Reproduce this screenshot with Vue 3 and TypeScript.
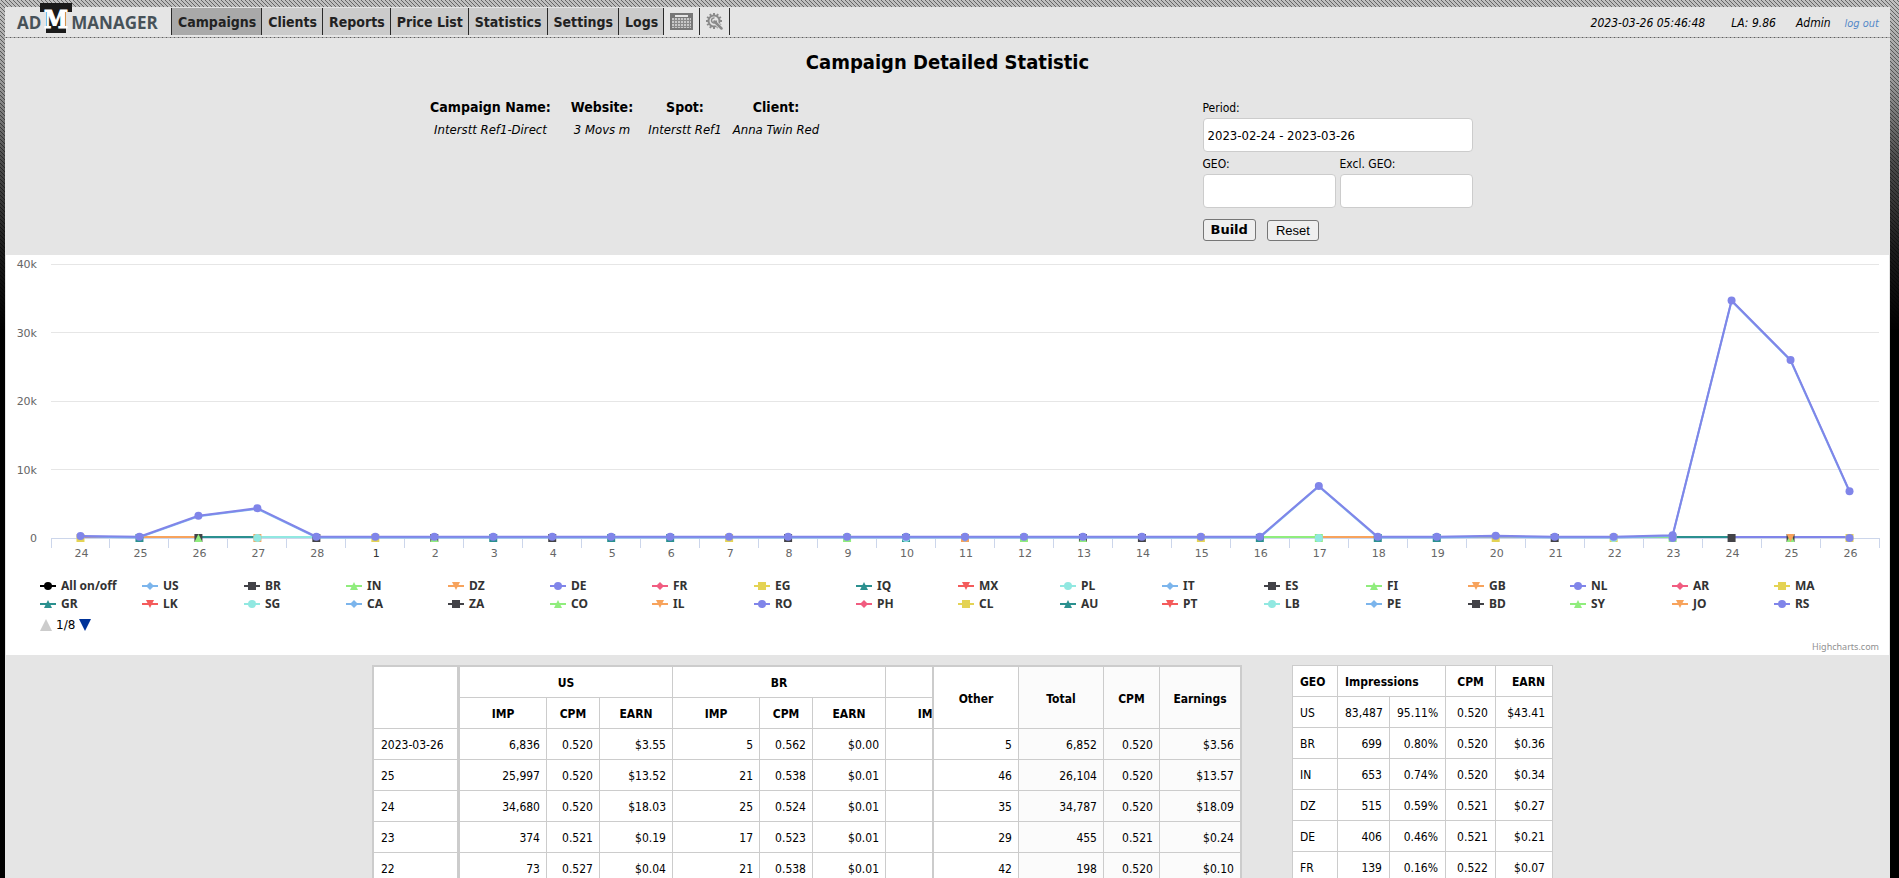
<script setup lang="ts">
interface NavItem {
  label: string
  active?: boolean
}

type Shape = 'circle' | 'diamond' | 'square' | 'triangle' | 'triangle-down'

interface LegendItem {
  name: string
  color: string
  shape: Shape
}

interface Marker {
  index: number
  color: string
  shape: Shape
}

const nav: NavItem[] = [
  { label: 'Campaigns', active: true },
  { label: 'Clients' },
  { label: 'Reports' },
  { label: 'Price List' },
  { label: 'Statistics' },
  { label: 'Settings' },
  { label: 'Logs' },
]

const details = [
  { title: 'Campaign Name:', value: 'Interstt Ref1-Direct' },
  { title: 'Website:', value: '3 Movs m' },
  { title: 'Spot:', value: 'Interstt Ref1' },
  { title: 'Client:', value: 'Anna Twin Red' },
]

/* ---- chart ---- */
const palette = [
  '#7cb5ec', '#434348', '#90ed7d', '#f7a35c', '#8085e9',
  '#f15c80', '#e4d354', '#2b908f', '#f45b5b', '#91e8e1',
]
const shapes: Shape[] = ['diamond', 'square', 'triangle', 'triangle-down', 'circle']
const countries = (
  'US BR IN DZ DE FR EG IQ MX PL IT ES FI GB NL AR MA ' +
  'GR LK SG CA ZA CO IL RO PH CL AU PT LB PE BD SY JO RS'
).split(' ')

const legend: LegendItem[] = [
  { name: 'All on/off', color: '#000000', shape: 'circle' },
  ...countries.map((name, i) => ({
    name,
    color: palette[i % palette.length],
    shape: shapes[i % shapes.length],
  })),
]

const days = [24, 25, 26, 27, 28, ...Array.from({ length: 26 }, (_, i) => i + 1)]
const totals = [
  300, 180, 3250, 4350, 180, 180, 180, 180, 180, 180, 180, 180, 180, 180, 180, 180,
  180, 180, 180, 180, 180, 7600, 180, 180, 320, 180, 180, 400, 34680, 25997, 6836,
]

const plot = { left: 45, right: 1873, top: 9, bottom: 283 }
const step = (plot.right - plot.left) / days.length
const px = (i: number) => plot.left + step * (i + 0.5)
const py = (v: number) => plot.bottom - (v / 40000) * (plot.bottom - plot.top)
const crisp = (v: number) => Math.floor(v) + 0.5
const line = (values: number[]) => values.map((v, i) => `${px(i)},${py(v)}`).join(' ')

const gridLevels = [
  { value: 40000, label: '40k' },
  { value: 30000, label: '30k' },
  { value: 20000, label: '20k' },
  { value: 10000, label: '10k' },
  { value: 0, label: '0' },
]

const [blue, dark, green, orange, violet, pink, yellow, teal, red, cyan] = palette

const segmentColors = [
  red, orange, teal, cyan, cyan, yellow, orange, pink, blue, dark, teal, yellow, pink, orange, pink,
  orange, dark, green, pink, red, green, orange, violet, orange, orange, orange, green, teal, violet, violet,
]

const lowMarkers: Marker[] = [
  ...[
    yellow, teal, dark, orange, dark, yellow, dark, teal, dark, teal, teal, yellow, dark, green,
    teal, orange, green, dark, dark, yellow, teal, green, teal, teal, yellow, dark, yellow, green,
    dark, dark, yellow,
  ].map((color, index) => ({ index, color, shape: 'square' as Shape })),
  { index: 2, color: green, shape: 'triangle' },
  { index: 3, color: cyan, shape: 'circle' },
  { index: 6, color: green, shape: 'triangle' },
  { index: 14, color: cyan, shape: 'circle' },
  { index: 15, color: blue, shape: 'diamond' },
  { index: 17, color: green, shape: 'triangle' },
  { index: 21, color: cyan, shape: 'circle' },
  { index: 26, color: cyan, shape: 'circle' },
  { index: 27, color: violet, shape: 'circle' },
  { index: 29, color: green, shape: 'triangle' },
  { index: 29, color: orange, shape: 'triangle-down' },
  { index: 30, color: violet, shape: 'circle' },
]

function symbol(shape: Shape, x: number, y: number): string {
  switch (shape) {
    case 'square':
      return `M${x - 4} ${y - 4}h8v8h-8z`
    case 'diamond':
      return `M${x} ${y - 4}L${x + 4} ${y}L${x} ${y + 4}L${x - 4} ${y}z`
    case 'triangle':
      return `M${x} ${y - 4}L${x + 4} ${y + 4}H${x - 4}z`
    case 'triangle-down':
      return `M${x - 4} ${y - 4}H${x + 4}L${x} ${y + 4}z`
    default:
      return `M${x - 4} ${y}a4 4 0 1 0 8 0a4 4 0 1 0 -8 0z`
  }
}

/* ---- tables ---- */
const groups = [
  { name: 'US', columns: ['IMP', 'CPM', 'EARN'] },
  { name: 'BR', columns: ['IMP', 'CPM', 'EARN'] },
  { name: '', columns: ['IMP', '', ''] },
]

const stats = [
  { date: '2023-03-26', cells: ['6,836', '0.520', '$3.55', '5', '0.562', '$0.00'], sum: ['5', '6,852', '0.520', '$3.56'] },
  { date: '25', cells: ['25,997', '0.520', '$13.52', '21', '0.538', '$0.01'], sum: ['46', '26,104', '0.520', '$13.57'] },
  { date: '24', cells: ['34,680', '0.520', '$18.03', '25', '0.524', '$0.01'], sum: ['35', '34,787', '0.520', '$18.09'] },
  { date: '23', cells: ['374', '0.521', '$0.19', '17', '0.523', '$0.01'], sum: ['29', '455', '0.521', '$0.24'] },
  { date: '22', cells: ['73', '0.527', '$0.04', '21', '0.538', '$0.01'], sum: ['42', '198', '0.520', '$0.10'] },
]

const geo = [
  ['US', '83,487', '95.11%', '0.520', '$43.41'],
  ['BR', '699', '0.80%', '0.520', '$0.36'],
  ['IN', '653', '0.74%', '0.520', '$0.34'],
  ['DZ', '515', '0.59%', '0.521', '$0.27'],
  ['DE', '406', '0.46%', '0.521', '$0.21'],
  ['FR', '139', '0.16%', '0.522', '$0.07'],
]

const teeth = Array.from({ length: 12 }, (_, i) => i * 30)
</script>

<template>
  <div class="page">
    <header class="header">
      <a class="logo" href="#" aria-label="AD M MANAGER">
        <span>AD</span>
        <svg class="mark" width="32" height="30" viewBox="0 0 32 30" aria-hidden="true">
          <path d="M0 0H32V9H26V30H6V9H0z" fill="#1a1a1a" />
          <text class="mark-letter" x="16" y="25" text-anchor="middle">M</text>
        </svg>
        <span>MANAGER</span>
      </a>

      <nav class="nav">
        <a v-for="item in nav" :key="item.label" href="#" class="tab" :class="{ active: item.active }">{{ item.label }}</a>
        <a href="#" class="tab icon" aria-label="Calendar">
          <svg width="23" height="17" viewBox="0 0 23 17">
            <path d="M0 0H23V17H0z" fill="#777" />
            <path d="M5 2H18V4H5z" fill="#e5e5e5" />
            <path d="M2 5H21V15H2z" fill="#c8c8c8" />
            <path d="M2 7.500H21M2 10.500H21M2 13.500H21M4.500 5V15M7.500 5V15M10.500 5V15M13.500 5V15M16.500 5V15M19.500 5V15" stroke="#8a8a8a" fill="none" />
          </svg>
        </a>
        <a href="#" class="tab icon last" aria-label="Tools">
          <svg width="17" height="17" viewBox="0 0 17 17">
            <g fill="#8a8a8a">
              <rect v-for="a in teeth" :key="a" x="7" y="0" width="2" height="2" :transform="`rotate(${a} 8 8)`" />
            </g>
            <circle cx="8" cy="8" r="5.500" fill="none" stroke="#8a8a8a" stroke-width="2" />
            <path d="M8.500 8.500L15.500 15.500" stroke="#e5e5e5" stroke-width="4" />
            <path d="M8.500 8.500L15.500 15.500" stroke="#8a8a8a" stroke-width="2.500" stroke-linecap="round" />
            <path d="M8.500 5A2.500 2.500 0 1 0 10.500 7.500" fill="none" stroke="#8a8a8a" stroke-width="1.500" />
          </svg>
        </a>
      </nav>

      <div class="session">
        <time class="clock">2023-03-26 05:46:48</time>
        <span class="load">LA: 9.86</span>
        <span class="user">Admin</span>
        <a href="#" class="logout">log out</a>
      </div>
    </header>

    <main class="content">
      <h1>Campaign Detailed Statistic</h1>

      <section class="summary">
        <table class="details">
          <colgroup>
            <col class="w-name" />
            <col class="w-site" />
            <col class="w-site" />
            <col class="w-client" />
          </colgroup>
          <thead>
            <tr><th v-for="d in details" :key="d.title">{{ d.title }}</th></tr>
          </thead>
          <tbody>
            <tr><td v-for="d in details" :key="d.title">{{ d.value }}</td></tr>
          </tbody>
        </table>

        <form class="filters" @submit.prevent>
          <div class="field wide">
            <label for="period">Period:</label>
            <input id="period" type="text" value="2023-02-24 - 2023-03-26" />
          </div>
          <div class="field">
            <label for="geo">GEO:</label>
            <input id="geo" type="text" />
          </div>
          <div class="field">
            <label for="excl">Excl. GEO:</label>
            <input id="excl" type="text" />
          </div>
          <div class="buttons">
            <button type="submit" class="build">Build</button>
            <button type="reset" class="reset">Reset</button>
          </div>
        </form>
      </section>

      <section class="chart">
        <svg class="plot" viewBox="0 0 1883 322" role="img" aria-label="Impressions by day">
          <g v-for="g in gridLevels" :key="g.label">
            <line
              :x1="plot.left" :x2="plot.right" :y1="crisp(py(g.value))" :y2="crisp(py(g.value))"
              :class="g.value ? 'grid' : 'axis'"
            />
            <text class="axis-label" x="31" :y="py(g.value) + 4" text-anchor="end">{{ g.label }}</text>
          </g>
          <line
            v-for="n in days.length + 1" :key="'t' + n" class="axis"
            :x1="crisp(plot.left + step * (n - 1))" :x2="crisp(plot.left + step * (n - 1))"
            :y1="plot.bottom" :y2="plot.bottom + 10"
          />
          <text
            v-for="(d, i) in days" :key="'d' + i" class="axis-label" :class="{ strong: i === 5 }"
            :x="px(i) + 1" :y="plot.bottom + 19" text-anchor="middle"
          >{{ d }}</text>

          <line
            v-for="(c, i) in segmentColors" :key="'s' + i" :stroke="c" stroke-width="2"
            :x1="px(i)" :x2="px(i + 1)" :y1="plot.bottom - 1" :y2="plot.bottom - 1"
          />
          <path v-for="(m, i) in lowMarkers" :key="'m' + i" :fill="m.color" :d="symbol(m.shape, px(m.index), plot.bottom)" />
          <polyline class="series under" :points="line(totals.map((v) => v - 90))" />
          <polyline class="series" :points="line(totals)" />
          <circle v-for="(v, i) in totals" :key="'p' + i" class="point" :cx="px(i)" :cy="py(v)" r="4" />
        </svg>

        <div class="legend">
          <button v-for="item in legend" :key="item.name" type="button" class="legend-item">
            <svg width="16" height="10" viewBox="0 0 16 10" aria-hidden="true">
              <path d="M0 5H16" :stroke="item.color" stroke-width="2" />
              <path :d="symbol(item.shape, 8, 5)" :fill="item.color" />
            </svg>
            {{ item.name }}
          </button>
        </div>
        <div class="chart-foot">
          <div class="pager">
            <button type="button" aria-label="Previous">
              <svg width="12" height="12" viewBox="0 0 12 12"><path d="M6 0L12 12H0z" fill="#ccc" /></svg>
            </button>
            <span>1/8</span>
            <button type="button" aria-label="Next">
              <svg width="12" height="12" viewBox="0 0 12 12"><path d="M0 0H12L6 12z" fill="#003399" /></svg>
            </button>
          </div>
          <a href="#" class="credits">Highcharts.com</a>
        </div>
      </section>

      <section class="tables">
        <div class="stats">
          <table class="dates">
            <thead>
              <tr class="tall"><th></th></tr>
            </thead>
            <tbody>
              <tr v-for="s in stats" :key="s.date"><td>{{ s.date }}</td></tr>
            </tbody>
          </table>
          <div class="scroller">
            <table class="countries">
              <colgroup v-for="(g, i) in groups" :key="i">
                <col class="w-imp" />
                <col class="w-cpm" />
                <col class="w-earn" />
              </colgroup>
              <thead>
                <tr><th v-for="(g, i) in groups" :key="i" colspan="3">{{ g.name }}</th></tr>
                <tr>
                  <template v-for="(g, i) in groups" :key="i">
                    <th v-for="(c, n) in g.columns" :key="n">{{ c }}</th>
                  </template>
                </tr>
              </thead>
              <tbody>
                <tr v-for="s in stats" :key="s.date">
                  <td v-for="(c, i) in s.cells" :key="i">{{ c }}</td>
                  <td></td>
                  <td></td>
                  <td></td>
                </tr>
              </tbody>
            </table>
          </div>
          <table class="sums">
            <colgroup>
              <col class="w-sum" />
              <col class="w-sum" />
              <col class="w-sum-cpm" />
              <col class="w-sum-earn" />
            </colgroup>
            <thead>
              <tr class="tall">
                <th>Other</th>
                <th>Total</th>
                <th>CPM</th>
                <th>Earnings</th>
              </tr>
            </thead>
            <tbody>
              <tr v-for="s in stats" :key="s.date"><td v-for="(c, i) in s.sum" :key="i">{{ c }}</td></tr>
            </tbody>
          </table>
        </div>

        <table class="geo">
          <colgroup>
            <col class="w-geo" />
            <col class="w-geo-imp" />
            <col class="w-geo-share" />
            <col class="w-geo-cpm" />
            <col class="w-geo-earn" />
          </colgroup>
          <thead>
            <tr>
              <th>GEO</th>
              <th colspan="2">Impressions</th>
              <th class="center">CPM</th>
              <th>EARN</th>
            </tr>
          </thead>
          <tbody>
            <tr v-for="row in geo" :key="row[0]"><td v-for="(c, i) in row" :key="i">{{ c }}</td></tr>
          </tbody>
        </table>
      </section>
    </main>
  </div>
</template>

<style>
html,
body {
  margin: 0;
  background: #000;
}
</style>

<style scoped>
.page {
  box-sizing: border-box;
  display: flex;
  flex-direction: column;
  gap: 1px;
  height: 100vh;
  overflow: hidden;
  padding: 7px 9px 0 5px;
  font-family: "DejaVu Sans Condensed", Tahoma, sans-serif;
  font-size: 12px;
  color: #000;
  background-color: #c0c0c0;
  background-image:
    linear-gradient(to bottom, rgba(0, 0, 0, 0) 0, rgba(0, 0, 0, 0.2) 80px, rgba(0, 0, 0, 0.6) 160px, rgba(0, 0, 0, 0.86) 250px, #000 330px),
    linear-gradient(45deg, #666 13%, transparent 13%, transparent 50%, #666 50%, #666 63%, transparent 63%);
  background-size: 100% 100%, 4px 4px;
}

.header {
  display: flex;
  flex: none;
  height: 30px;
  background: #e5e5e5;
}

.logo {
  display: flex;
  align-items: flex-start;
  width: 154px;
  padding-left: 12px;
  font: bold 17px/31px "Open Sans", sans-serif;
  color: #475259;
  text-decoration: none;
}

.mark {
  flex: none;
  margin: -4px -1px 0;
}

.mark-letter {
  font: bold 24px "DejaVu Serif Condensed", "DejaVu Serif", serif;
  fill: #fff;
  stroke: #fff;
  stroke-width: 1px;
}

.nav {
  display: flex;
  height: 27px;
  margin-top: 1px;
}

.tab {
  padding: 0 5px 0 6px;
  border-left: 1px solid #2a2a2a;
  font-size: 14px;
  font-weight: bold;
  line-height: 28px;
  color: #222;
  text-decoration: none;
  background: #cbcbcb;
}

.tab.active {
  background: #a9a9a9;
}

.tab.icon {
  display: flex;
  align-items: center;
  padding: 0 6px;
  background: none;
}

.tab.last {
  border-right: 1px solid #2a2a2a;
}

.session {
  display: flex;
  align-items: center;
  height: 32px;
  margin-left: auto;
  padding-right: 11px;
  font-style: italic;
}

.load {
  margin-left: 26px;
}

.user {
  margin-left: 20px;
}

.logout {
  margin-left: 14px;
  font-size: 11px;
  color: #5589c8;
  text-decoration: none;
}

.content {
  flex: 1;
  min-height: 0;
  background: #e5e5e5;
}

h1 {
  margin: 0;
  padding: 11px 0 21px;
  font-size: 20px;
  line-height: 26px;
  text-align: center;
}

.summary {
  display: flex;
  justify-content: center;
  align-items: flex-start;
  gap: 377px;
  padding: 0 2px 14px 0;
}

.details {
  table-layout: fixed;
  width: 405px;
  border-collapse: collapse;
}

.details th {
  padding: 0;
  font-size: 14px;
  line-height: 22px;
  white-space: nowrap;
}

.details td {
  padding: 0;
  font-size: 13px;
  font-style: italic;
  line-height: 24px;
  text-align: center;
  white-space: nowrap;
}

.w-name { width: 140px; }
.w-site { width: 83px; }
.w-client { width: 99px; }

.filters {
  display: grid;
  grid-template-columns: 1fr 1fr;
  column-gap: 4px;
  width: 270px;
  padding-top: 2px;
}

.field {
  display: flex;
  flex-direction: column;
}

.field.wide,
.buttons {
  grid-column: 1 / -1;
}

.field label {
  padding-top: 2px;
  line-height: 20px;
}

.wide label {
  padding-top: 0;
}

.field input {
  box-sizing: border-box;
  width: 100%;
  height: 34px;
  padding: 0 4px;
  border: 1px solid #ccc;
  border-radius: 4px;
  font: inherit;
  font-size: 13px;
  background: #fff;
}

.buttons {
  display: flex;
  align-items: flex-end;
  gap: 11px;
  padding-top: 11px;
}

.buttons button {
  padding: 0 7px;
  border: 1px solid #767676;
  border-radius: 3px;
  background: #efefef;
  color: #000;
}

.buttons .build {
  height: 22px;
  font: bold 13px/20px "DejaVu Sans", sans-serif;
}

.buttons .reset {
  height: 21px;
  padding: 0 8px;
  font: 13px/19px "Liberation Sans", sans-serif;
}

.chart {
  margin: 0 1px;
  background: #fff;
  font-family: "DejaVu Sans", sans-serif;
}

.plot {
  display: block;
  width: 100%;
}

.grid { stroke: #e6e6e6; }
.axis { stroke: #ccd6eb; }

.axis-label {
  font-size: 11px;
  fill: #666;
}

.axis-label.strong {
  fill: #333;
}

.series {
  fill: none;
  stroke: #8085e9;
  stroke-width: 2;
  stroke-linejoin: round;
}

.series.under { stroke: #7cb5ec; }
.point { fill: #8085e9; }

.legend {
  display: grid;
  grid-template-columns: repeat(auto-fill, 102px);
  padding: 0 10px 0 34px;
}

.legend-item {
  display: flex;
  align-items: center;
  gap: 5px;
  height: 18px;
  padding: 0;
  border: 0;
  background: none;
  font: bold 12px/18px "Noto Sans", sans-serif;
  color: #333;
}

.chart-foot {
  display: flex;
  justify-content: space-between;
  height: 42px;
  padding: 0 10px 0 34px;
}

.pager {
  display: flex;
  align-items: center;
  gap: 4px;
  height: 24px;
  font: 12px "DejaVu Sans", sans-serif;
}

.pager button {
  display: flex;
  padding: 0;
  border: 0;
  background: none;
}

.credits {
  align-self: flex-end;
  font: 9px/16px "Noto Sans", sans-serif;
  color: #909090;
  text-decoration: none;
}

.tables {
  display: flex;
  justify-content: center;
  align-items: flex-start;
  gap: 50px;
  padding: 10px 0 0 30px;
}

.stats {
  display: flex;
  border: 2px solid #ccc;
  background: #fff;
}

.tables table {
  table-layout: fixed;
  border-collapse: separate;
  border-spacing: 0;
  background: #fff;
}

.tables tr {
  height: 31px;
}

.tables tr.tall {
  height: 62px;
}

.tables th,
.tables td {
  box-sizing: border-box;
  height: 31px;
  padding: 2px 6px 0;
  border-right: 1px solid #ccc;
  border-bottom: 1px solid #ccc;
  line-height: 20px;
  text-align: right;
  white-space: nowrap;
}

.tables th {
  text-align: center;
}

.tables .stats th:last-child,
.tables .stats td:last-child {
  border-right: 0;
}

.dates {
  width: 83px;
}

.tables .dates td {
  padding-left: 7px;
  text-align: left;
}

.scroller {
  width: 472px;
  overflow: hidden;
  border: solid #ccc;
  border-width: 0 2px 0 3px;
}

.countries { width: 639px; }
.w-imp { width: 87px; }
.w-cpm { width: 53px; }
.w-earn { width: 73px; }

.sums { width: 306px; }
.w-sum { width: 85px; }
.w-sum-cpm { width: 56px; }
.w-sum-earn { width: 80px; }

.sums th:nth-child(n + 2),
.sums td:nth-child(n + 2) {
  background: #fbfbfb;
}

.tables .geo {
  width: 261px;
  border: solid #ccc;
  border-width: 1px 0 0 1px;
}

.w-geo { width: 45px; }
.w-geo-imp { width: 52px; }
.w-geo-share { width: 56px; }
.w-geo-cpm { width: 50px; }
.w-geo-earn { width: 57px; }

.tables .geo th,
.tables .geo td {
  padding: 2px 7px 0;
}

.tables .geo th {
  text-align: right;
}

.tables .geo th.center {
  text-align: center;
}

.tables .geo th:nth-child(-n + 2),
.tables .geo td:first-child {
  text-align: left;
}
</style>
